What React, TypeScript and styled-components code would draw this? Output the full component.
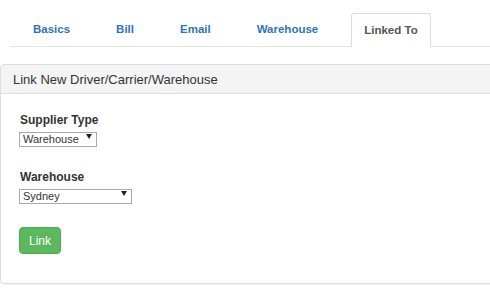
import React from 'react'
import styled, { createGlobalStyle } from 'styled-components'

const GlobalStyle = createGlobalStyle`
    html, body {
        margin: 0;
        padding: 0;
        background: #ffffff;
        overflow: hidden;
    }
    body {
        font-family: "Liberation Sans", Arial, sans-serif;
        color: #333333;
    }
`

const Page = styled.div`
    width: 490px;
    height: 292px;
    overflow: hidden;
    padding-top: 13px;
    box-sizing: border-box;
`

const TabBar = styled.ul`
    display: flex;
    list-style: none;
    margin: 0 0 0 10px;
    padding: 0;
    border-bottom: 1px solid #e3e3e3;
    height: 33px;
`

const Tab = styled.li<{ active?: boolean }>`
    display: flex;
    align-items: center;
    margin: 0 10px ${({ active }) => (active ? '-1px' : '0')};
    padding: 0 12px 1px;
    height: ${({ active }) => (active ? '34px' : '33px')};
    box-sizing: border-box;
    font-size: 11.5px;
    font-weight: bold;
    color: ${({ active }) => (active ? '#555555' : '#2f72bd')};
    background: ${({ active }) => (active ? '#ffffff' : 'transparent')};
    border: 1px solid ${({ active }) => (active ? '#dddddd' : 'transparent')};
    border-bottom-color: ${({ active }) => (active ? '#ffffff' : 'transparent')};
    border-radius: 3px 3px 0 0;
`

const Panel = styled.div`
    margin-top: 17px;
    width: 520px;
    height: 220px;
    box-sizing: border-box;
    border: 1px solid #dddddd;
    border-radius: 4px;
    box-shadow: 0 1px 1px rgba(0, 0, 0, 0.05);
`

const PanelHeader = styled.div`
    height: 29px;
    box-sizing: border-box;
    display: flex;
    align-items: center;
    padding: 0 12px;
    background: #f4f4f4;
    border-bottom: 1px solid #dddddd;
    border-radius: 3px 3px 0 0;
    font-size: 13px;
    color: #333333;
`

const PanelBody = styled.div`
    padding: 18px 18px 0;
    display: flex;
    flex-direction: column;
    align-items: flex-start;
`

const Field = styled.div`
    display: flex;
    flex-direction: column;
    align-items: flex-start;
    margin-bottom: 25px;
`

const Label = styled.label`
    font-size: 12px;
    font-weight: bold;
    line-height: 16px;
    margin-left: 1px;
    margin-bottom: 1px;
    color: #333333;
`

const SelectWrap = styled.div<{ width: number }>`
    position: relative;
    width: ${({ width }) => width}px;
    height: 15px;
`

const Select = styled.select`
    appearance: none;
    -webkit-appearance: none;
    width: 100%;
    height: 100%;
    box-sizing: border-box;
    margin: 0;
    padding: 0 14px 0 3px;
    border: 1px solid #a9a9a9;
    border-radius: 0;
    background: #ffffff;
    font-family: "Liberation Sans", Arial, sans-serif;
    font-size: 11px;
    line-height: 13px;
    color: #333333;
`

const Arrow = styled.svg`
    position: absolute;
    right: 5px;
    top: 5px;
    pointer-events: none;
`

const LinkButton = styled.button`
    margin-top: 1px;
    width: 42px;
    height: 27px;
    box-sizing: border-box;
    border: 1px solid #4cae4c;
    border-radius: 4px;
    background: #5cb85c;
    color: #ffffff;
    font-family: "Liberation Sans", Arial, sans-serif;
    font-size: 12px;
    padding: 0;
`

interface DropdownProps {
    width: number;
    value: string;
    options: string[];
}

const Dropdown: React.FC<DropdownProps> = ({ width, value, options }: DropdownProps) => (
    <SelectWrap width={width}>
        <Select defaultValue={value}>
            {options.map((o) => (
                <option key={o} value={o}>{o}</option>
            ))}
        </Select>
        <Arrow width="6" height="5" viewBox="0 0 6 5">
            <path d="M0 0 H6 L3 5 Z" fill="#222" />
        </Arrow>
    </SelectWrap>
)

const tabs = ['Basics', 'Bill', 'Email', 'Warehouse', 'Linked To']

export default function App() {
    return (
        <Page>
            <GlobalStyle />
            <TabBar>
                {tabs.map((t) => (
                    <Tab key={t} active={t === 'Linked To'}>{t}</Tab>
                ))}
            </TabBar>
            <Panel>
                <PanelHeader>Link New Driver/Carrier/Warehouse</PanelHeader>
                <PanelBody>
                    <Field>
                        <Label>Supplier Type</Label>
                        <Dropdown width={78} value="Warehouse" options={['Driver', 'Carrier', 'Warehouse']} />
                    </Field>
                    <Field>
                        <Label>Warehouse</Label>
                        <Dropdown width={113} value="Sydney" options={['Sydney', 'Melbourne', 'Brisbane']} />
                    </Field>
                    <LinkButton>Link</LinkButton>
                </PanelBody>
            </Panel>
        </Page>
    )
}
